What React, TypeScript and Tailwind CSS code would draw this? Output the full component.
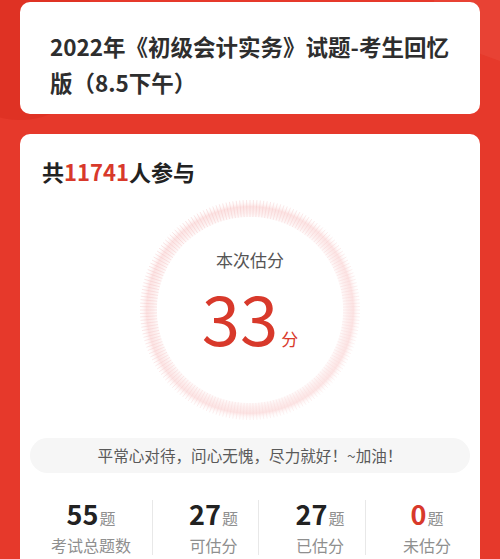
import React from 'react'

const font = { fontFamily: '"Noto Sans CJK SC", "Noto Sans", sans-serif' }

function Ring() {
  const ticks = []
  for (let i = 0; i < 200; i++) {
    const a = (i / 200) * Math.PI * 2
    const x1 = 110 + Math.cos(a) * 93
    const y1 = 110 + Math.sin(a) * 93
    const x2 = 110 + Math.cos(a) * 110
    const y2 = 110 + Math.sin(a) * 110
    ticks.push(<line key={i} x1={x1} y1={y1} x2={x2} y2={y2} />)
  }
  return (
    <svg viewBox="0 0 220 220" className="absolute inset-0 h-full w-full">
      <defs>
        <radialGradient id="glow" cx="50%" cy="50%" r="50%">
          <stop offset="0.8" stopColor="#fff" stopOpacity="0" />
          <stop offset="0.88" stopColor="#fdf0f0" stopOpacity="1" />
          <stop offset="0.94" stopColor="#fce3e3" stopOpacity="1" />
          <stop offset="1" stopColor="#fff" stopOpacity="0" />
        </radialGradient>
        <linearGradient id="tick" x1="0" y1="0" x2="220" y2="220" gradientUnits="userSpaceOnUse">
          <stop offset="0" stopColor="#f2b0b0" />
          <stop offset="0.5" stopColor="#f6caca" />
          <stop offset="1" stopColor="#fbe4e4" />
        </linearGradient>
      </defs>
      <circle cx="110" cy="110" r="110" fill="url(#glow)" />
      <g stroke="url(#tick)" strokeWidth="0.8" opacity="0.45">
        {ticks}
      </g>
      <circle cx="110" cy="110" r="93" fill="#fff" />
    </svg>
  )
}

function Stat({ value, label, red, first }: { value: string; label: string; red?: boolean; first?: boolean }) {
  return (
    <div className={first ? 'flex flex-col items-center' : 'flex flex-col items-center border-l border-[#e8e8e8] pl-[16px]'}>
      <div className="flex items-baseline leading-none">
        <span className={red ? 'text-[27px] font-bold text-[#d8392b]' : 'text-[27px] font-bold text-[#222]'}>{value}</span>
        <span className="ml-[1px] text-[16px] text-[#8f8f8f]">题</span>
      </div>
      <div className="mt-[8px] text-[16px] leading-[20px] text-[#8f8f8f]">{label}</div>
    </div>
  )
}

export default function App() {
  return (
    <div style={font} className="relative h-[559px] w-[500px] overflow-hidden bg-[#e6392b]">
      <div className="absolute -left-[60px] -top-[40px] h-[160px] w-[160px] rounded-full bg-[#dc2f22] opacity-70" />
      <div className="absolute -right-[20px] -top-[10px] h-[60px] w-[90px] rotate-[20deg] bg-[#ea4a3a] opacity-60" />
      <div className="relative px-[20px] pt-[2px]">
        <div className="rounded-[10px] bg-white pb-[14px] pl-[30px] pr-[26px] pt-[26px]">
          <h1 className="text-[22.5px] font-bold leading-[36px] text-[#2e2e2e]">
            2022年《初级会计实务》试题-考生回忆版（8.5下午）
          </h1>
        </div>
        <div className="mt-[20px] rounded-t-[10px] bg-white px-[10px] pb-[20px] pt-[22px]">
          <div className="pl-[12px] text-[22px] font-bold leading-[30px] text-[#222]">
            共<span className="text-[#d8392b]">11741</span>人参与
          </div>
          <div className="mt-[14px] flex justify-center">
            <div className="relative flex h-[220px] w-[220px] flex-col items-center">
              <Ring />
              <div className="relative mt-[49px] text-[17px] leading-[22px] text-[#555]">本次估分</div>
              <div className="relative mt-[10px] flex items-baseline text-[#d8392b]">
                <span className="text-[69px] font-normal leading-[70px]">33</span>
                <span className="ml-[3px] text-[17px]">分</span>
              </div>
            </div>
          </div>
          <div className="mt-[18px] flex h-[35px] items-center justify-center rounded-full bg-[#f6f6f6] text-[15.6px] text-[#5a5a5a]">
            平常心对待，问心无愧，尽力就好！~加油！
          </div>
          <div className="mt-[27px] grid grid-cols-[122px_106px_107px_107px]">
            <Stat first value="55" label="考试总题数" />
            <Stat value="27" label="可估分" />
            <Stat value="27" label="已估分" />
            <Stat red value="0" label="未估分" />
          </div>
        </div>
      </div>
    </div>
  )
}
